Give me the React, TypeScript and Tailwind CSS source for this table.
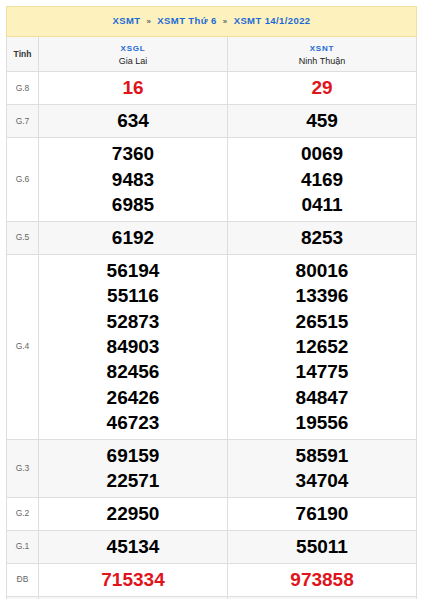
import React from 'react';

type Row = { label: string; a: string[]; b: string[]; red?: boolean };

const rows: Row[] = [
  { label: 'G.8', a: ['16'], b: ['29'], red: true },
  { label: 'G.7', a: ['634'], b: ['459'] },
  { label: 'G.6', a: ['7360', '9483', '6985'], b: ['0069', '4169', '0411'] },
  { label: 'G.5', a: ['6192'], b: ['8253'] },
  {
    label: 'G.4',
    a: ['56194', '55116', '52873', '84903', '82456', '26426', '46723'],
    b: ['80016', '13396', '26515', '12652', '14775', '84847', '19556'],
  },
  { label: 'G.3', a: ['69159', '22571'], b: ['58591', '34704'] },
  { label: 'G.2', a: ['22950'], b: ['76190'] },
  { label: 'G.1', a: ['45134'], b: ['55011'] },
  { label: 'ĐB', a: ['715334'], b: ['973858'], red: true },
];

function Nums({ list, red }: { list: string[]; red?: boolean }) {
  return (
    <td className="border border-[#dedede] text-center py-[3.33px]">
      {list.map((n) => (
        <div
          key={n}
          className={`font-bold text-[19px] leading-[25.33px] ${red ? 'text-[#e0141b]' : 'text-black'}`}
        >
          {n}
        </div>
      ))}
    </td>
  );
}

export default function App() {
  return (
    <div className="bg-white min-h-[599px] px-[6px] pt-[6px] font-['Liberation_Sans',Arial,sans-serif]">
      <table className="w-[410px] border-collapse table-fixed">
        <colgroup>
          <col className="w-[32px]" />
          <col className="w-[189px]" />
          <col className="w-[189px]" />
        </colgroup>
        <thead>
          <tr>
            <th
              colSpan={3}
              className="h-[30px] bg-[#fdf1bd] border border-[#f1dfa0] text-[9.5px] font-bold text-[#1c6ad6] tracking-[0.4px]"
            >
              <span>XSMT</span>
              <span className="mx-[6px] text-[8px] text-[#666]">»</span>
              <span>XSMT Thứ 6</span>
              <span className="mx-[6px] text-[8px] text-[#666]">»</span>
              <span>XSMT 14/1/2022</span>
            </th>
          </tr>
          <tr className="bg-[#f7f7f7] h-[35px]">
            <th className="border border-[#dedede] text-[8.5px] font-bold text-[#333]">Tỉnh</th>
            <th className="border border-[#dedede] font-normal leading-[13px] pt-[1px]">
              <div className="text-[8px] font-bold text-[#1c6ad6] tracking-[0.8px]">XSGL</div>
              <div className="text-[9px] text-[#222]">Gia Lai</div>
            </th>
            <th className="border border-[#dedede] font-normal leading-[13px] pt-[1px]">
              <div className="text-[8px] font-bold text-[#1c6ad6] tracking-[0.8px]">XSNT</div>
              <div className="text-[9px] text-[#222]">Ninh Thuận</div>
            </th>
          </tr>
        </thead>
        <tbody>
          {rows.map((r, i) => (
            <tr key={r.label} className={i % 2 === 1 ? 'bg-[#f7f7f7]' : 'bg-white'}>
              <td className="border border-[#dedede] text-center text-[8.5px] text-[#666]">{r.label}</td>
              <Nums list={r.a} red={r.red} />
              <Nums list={r.b} red={r.red} />
            </tr>
          ))}
          <tr className="bg-[#f7f7f7] h-[20px]">
            <td className="border border-[#dedede]" />
            <td className="border border-[#dedede]" />
            <td className="border border-[#dedede]" />
          </tr>
        </tbody>
      </table>
    </div>
  );
}
